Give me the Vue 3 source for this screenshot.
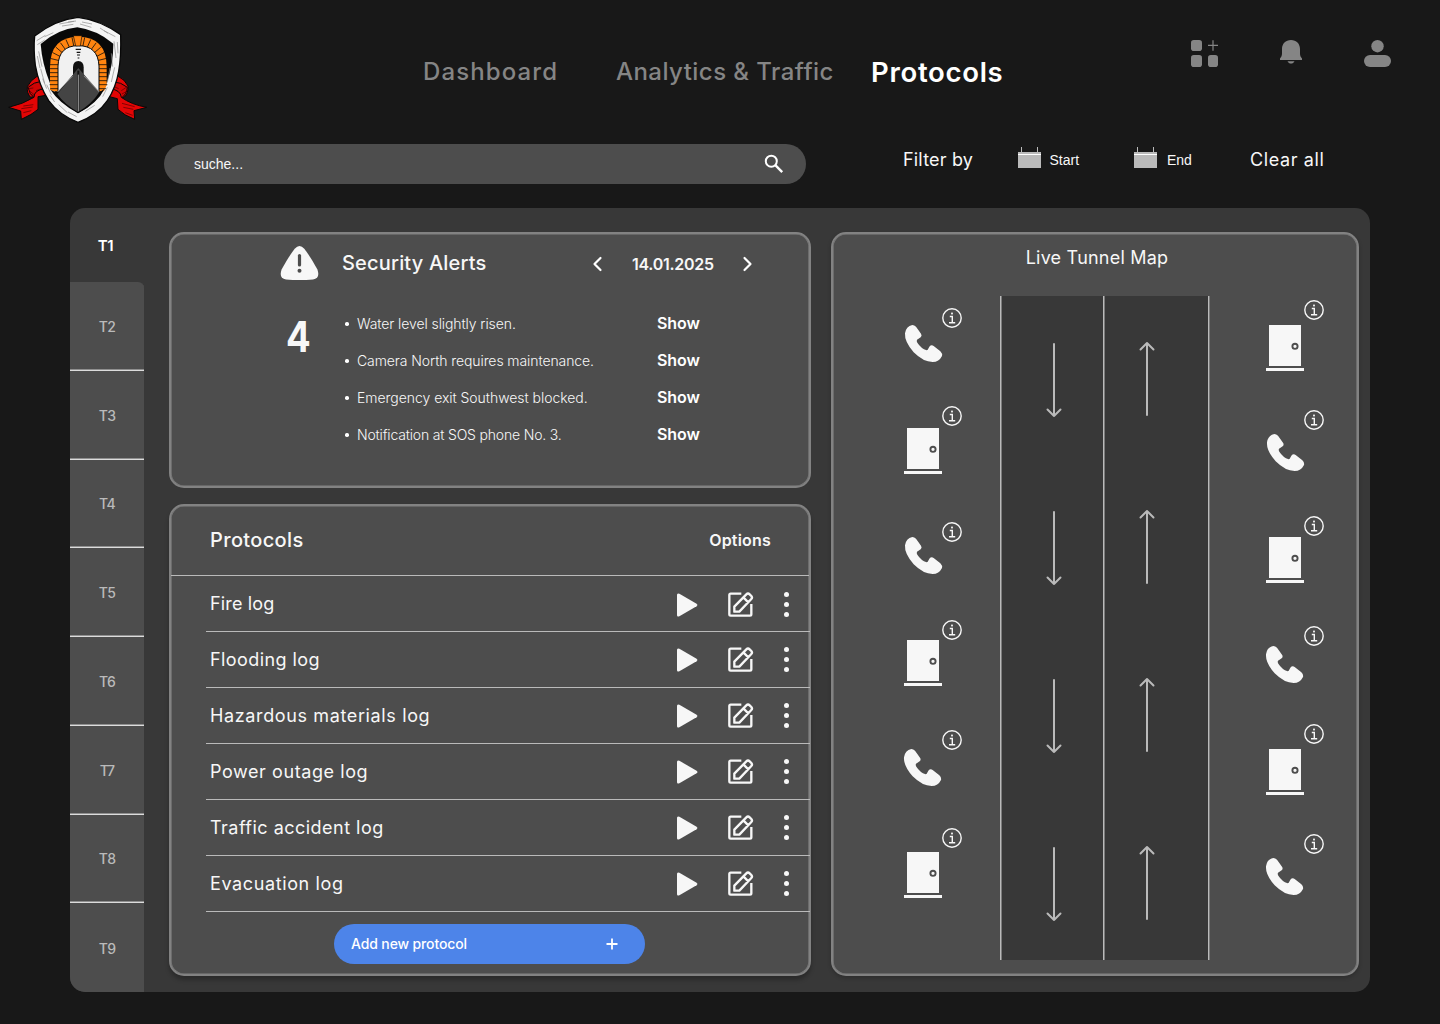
<script setup>
import { ref } from 'vue'

const nav = [
  { label: 'Dashboard', cls: 'nav-dashboard' },
  { label: 'Analytics & Traffic', cls: 'nav-analytics' },
  { label: 'Protocols', cls: 'nav-protocols' },
]
const tunnels = ['T1', 'T2', 'T3', 'T4', 'T5', 'T6', 'T7', 'T8', 'T9']
const activeTunnel = ref('T1')
const alerts = [
  { text: 'Water level slightly risen.', spacing: -0.09 },
  { text: 'Camera North requires maintenance.', spacing: -0.09 },
  { text: 'Emergency exit Southwest blocked.', spacing: -0.04 },
  { text: 'Notification at SOS phone No. 3.', spacing: -0.18 },
]
const protocols = [
  { name: 'Fire log', spacing: 0.16 },
  { name: 'Flooding log', spacing: 0.42 },
  { name: 'Hazardous materials log', spacing: 0.63 },
  { name: 'Power outage log', spacing: 0.58 },
  { name: 'Traffic accident log', spacing: 0.48 },
  { name: 'Evacuation log', spacing: 0.62 },
]

// Device coordinates are relative to the map canvas.
const devices = [
  { type: 'phone', x: 72, y: 91 },
  { type: 'door', x: 71, y: 194 },
  { type: 'phone', x: 72, y: 303 },
  { type: 'door', x: 71, y: 406 },
  { type: 'phone', x: 71, y: 515 },
  { type: 'door', x: 71, y: 618 },
  { type: 'door', x: 433, y: 91 },
  { type: 'phone', x: 434, y: 200 },
  { type: 'door', x: 433, y: 303 },
  { type: 'phone', x: 433, y: 412 },
  { type: 'door', x: 433, y: 515 },
  { type: 'phone', x: 433, y: 624 },
]
const infos = [
  ...[74, 172, 288, 386, 496, 594].map((y) => ({ x: 109, y })),
  ...[66, 176, 282, 392, 490, 600].map((y) => ({ x: 471, y })),
]
const arrows = [0, 168, 336, 504]

// Bricks of the tunnel arch on the crest.
const bricks = []
for (let i = 0; i < 15; i++) {
  const a = Math.PI - (Math.PI * i) / 14
  const [c, s] = [Math.cos(a), Math.sin(a)]
  bricks.push([235 + 60 * c, 194 - 56 * s, 235 + 86 * c, 194 - 84 * s])
}
</script>

<template>
  <div class="page">
    <header class="top">
      <svg class="logo" viewBox="0 0 480 420">
        <g stroke="#080808" stroke-width="3" stroke-linejoin="round">
          <path fill="#e30505" d="M110 230 Q92 240 82 260 Q80 280 92 292 L136 280 L118 228Z" />
          <path fill="#d00404" d="M84 262 Q102 246 124 244 L136 278 L104 294 Q88 284 84 262Z" />
          <path fill="#e30505" d="M134 266 Q102 270 102 292 Q70 312 26 322 L62 333 L64 358 Q96 344 114 328 L114 290 L138 286Z" />
          <path fill="#e30505" d="M356 230 Q374 238 384 258 Q386 280 372 292 L332 280 L348 228Z" />
          <path fill="#d00404" d="M382 262 Q362 246 342 246 L332 274 L364 294 Q380 284 382 262Z" />
          <path fill="#e30505" d="M330 266 Q362 270 364 292 Q394 314 440 322 L402 332 L404 358 Q372 346 354 328 L352 296 L328 290Z" />
        </g>
        <path d="M70 318l30-4M64 326l34-5M70 338l24-6M92 282l12 8M88 272l14 12M366 310l38 10M370 322l30 6M376 338l22 8M366 282l14-8M364 272l18-12M86 266l14-2M108 272l16-6M356 266l-14-6" stroke="#520000" stroke-width="2" fill="none" />
        <path fill="#f4f4f4" stroke="#080808" stroke-width="4" d="M234 52 Q300 60 362 104 Q364 168 356 214 Q348 262 322 302 Q292 346 234 367 Q178 346 146 302 Q116 254 106 196 Q100 148 104 108 Q164 60 234 52Z" />
        <path fill="#080808" d="M232 82 Q290 90 340 131 Q340 190 322 244 Q300 304 234 340 Q174 302 150 250 Q126 190 122 132 Q172 88 232 82Z" />
        <path fill="#ff8410" d="M150 270 V202 Q150 110 235 110 Q320 110 320 202 V256 L312 274 H160Z" />
        <g stroke="#16100a" stroke-width="2.5">
          <line v-for="(b, i) in bricks" :key="i" :x1="b[0]" :y1="b[1]" :x2="b[2]" :y2="b[3]" />
          <path d="M149 206h26M149 218h26M149 230h26M149 242h26M149 254h26M151 266h24M296 206h26M296 218h26M296 230h26M296 242h26M296 254h26M296 266h22" />
        </g>
        <path fill="#f1f1f1" stroke="#080808" stroke-width="3" d="M174 278 V198 Q176 137 235 137 Q294 137 297 198 V278Z" />
        <path fill="#ff8410" stroke="#080808" stroke-width="2" d="M220 107 H246 L241 138 H227Z" />
        <path fill="#111" d="M219 226 V202 Q219 184 235 183 Q251 184 251 202 V226Z" />
        <path fill="#080808" d="M152 270 L172 278 L218 226 L235 204 L252 226 L296 278 L314 266 Q292 310 234 340 Q178 310 152 270Z" />
        <path fill="#444" d="M235 204 L298 276 Q276 312 234 336 Q192 312 172 282Z" />
        <path d="M235 212 V334" stroke="#111" stroke-width="6" />
        <path d="M235 224 V334" stroke="#bbb" stroke-width="2.500" />
        <path d="M172 276 L218 228M298 276 L252 228" stroke="#aaa" stroke-width="2" />
        <path d="M227 148h16M230 157h11M231 165h9M233 174h5" stroke="#111" stroke-width="3.5" />
        <path d="M178 72l44-8M186 78l34-5M204 66l24-3M240 72l34 10M246 66l30 6M110 122l26-16M112 134l22-14M134 110l26-12M116 154l10 46M112 168l8 36M122 206l12 44M128 236l12 30M140 254l14 30M150 286l14 20M342 124l6 50M352 126l2 34M334 160l4 40M330 204l-8 44M344 202l-10 44M322 262l-14 28M284 316l-28 18M176 314l26 24M204 336l26 14M300 84l24 16M312 92l34 18" stroke="#8b8b8b" stroke-width="2" fill="none" />
      </svg>
      <nav class="nav">
        <a v-for="n in nav" :key="n.label" :class="n.cls">{{ n.label }}</a>
      </nav>
      <div class="actions">
        <svg width="27" height="27" viewBox="0 0 27 27" fill="#858585">
          <rect width="11" height="11" rx="2.8" /><rect y="15" width="11" height="12" rx="2.8" /><rect x="17" y="15" width="10" height="12" rx="2.8" />
          <path d="M22 .2v10.6M17 5.4h10" stroke="#858585" stroke-width="1.2" />
        </svg>
        <svg class="bell" width="22" height="24" viewBox="0 0 22 24" fill="#858585">
          <path d="M11 0C5.6 0 2 3.8 2 9v4.2c0 2.3-.6 3.6-2 5.4V20h22v-1.4c-1.400-1.800-2-3.100-2-5.400V9c0-5.200-3.600-9-9-9Z" /><path d="M7.500 21.200h7c-.8 1.600-2 2.400-3.500 2.400s-2.700-.8-3.500-2.400Z" />
        </svg>
        <svg width="27" height="27" viewBox="0 0 27 27" fill="#858585"><circle cx="13.500" cy="6.200" r="6.200" /><rect y="15" width="27" height="12" rx="6" /></svg>
      </div>
    </header>

    <section class="filters">
      <div class="search">
        <span>suche...</span>
        <svg width="20" height="20" viewBox="0 0 20 20" fill="none" stroke="#fff" stroke-width="2"><circle cx="7.300" cy="7.200" r="5.500" /><path d="M11.300 11.200 18.200 18.100" stroke-width="2.400" /></svg>
      </div>
      <span class="filter-by">Filter by</span>
      <div v-for="d in ['Start', 'End']" :key="d" class="date-field" :class="d.toLowerCase()">
        <svg width="23" height="21" viewBox="0 0 23 21"><path d="M0 5h23v16H0z" fill="#bababa" /><path d="M0 7.500h23" stroke="#fff" /><path d="M3.500 0v5M19.500 0v5" stroke="#bababa" /></svg>
        <span>{{ d }}</span>
      </div>
      <span class="clear">Clear all</span>
    </section>

    <main class="panel">
      <aside class="tabs">
        <div v-for="t in tunnels" :key="t" class="tab" :class="{ active: t === activeTunnel }" @click="activeTunnel = t">{{ t }}</div>
      </aside>

      <div class="left">
        <section class="card alerts">
          <div class="alerts-head">
            <svg width="39" height="34" viewBox="0 0 39 34"><path d="M14.700 2.700Q19.500-2.600 24.300 2.700Q31 11.500 37.400 23.500Q40.500 32.500 33 33.500Q19.500 34.600 6 33.500Q-1.500 32.500 1.600 23.500Q8 11.500 14.700 2.700Z" fill="#f7f7f7" /><path d="M19.500 9.500v9.500" stroke="#4d4d4d" stroke-width="3.200" stroke-linecap="round" /><circle cx="19.500" cy="24.800" r="2" fill="#4d4d4d" /></svg>
            <h2>Security Alerts</h2>
            <svg class="prev" width="10" height="16" viewBox="0 0 10 16"><path d="M8.500 2 2.500 8l6 6" /></svg>
            <time>14.01.2025</time>
            <svg class="next" width="10" height="16" viewBox="0 0 10 16"><path d="M1.500 2 7.500 8l-6 6" /></svg>
          </div>
          <div class="alerts-body">
            <strong class="count">4</strong>
            <ul>
              <li v-for="a in alerts" :key="a.text">
                <i></i><span :style="{ letterSpacing: a.spacing + 'px' }">{{ a.text }}</span><b>Show</b>
              </li>
            </ul>
          </div>
        </section>

        <section class="card logs">
          <div class="logs-head"><h2>Protocols</h2><span>Options</span></div>
          <div v-for="p in protocols" :key="p.name" class="log">
            <span class="log-name" :style="{ letterSpacing: p.spacing + 'px' }">{{ p.name }}</span>
            <div class="log-actions">
              <svg width="21" height="24" viewBox="0 0 21 24"><path d="M0 2Q0-.4 2.400.8L19.600 10.700Q21.400 12 19.600 13.300L2.400 23.200Q0 24.400 0 22Z" fill="#f7f7f7" /></svg>
              <svg class="edit" width="26" height="25" viewBox="0 0 78 75" fill="none" stroke="#f7f7f7" stroke-width="7">
                <path d="M40 5H8Q4 5 4 9V67Q4 71 8 71H66Q70 71 70 67V36" /><path d="M19 59V44L55 7Q60 2 65 7L70 12Q74 17 70 21L34 59ZM46 16 61 31" stroke-linejoin="round" />
              </svg>
              <svg width="5" height="25" viewBox="0 0 5 25" fill="#f7f7f7"><circle cx="2.500" cy="2.500" r="2.500" /><circle cx="2.500" cy="12.500" r="2.500" /><circle cx="2.500" cy="22.500" r="2.500" /></svg>
            </div>
          </div>
          <button class="add"><span>Add new protocol</span><svg width="12" height="12" viewBox="0 0 12 12"><path d="M6 .5v11M.5 6h11" stroke="#fff" stroke-width="1.800" /></svg></button>
        </section>
      </div>

      <section class="card map">
        <h3>Live Tunnel Map</h3>
        <div class="road">
          <div class="lane down">
            <svg v-for="a in arrows" :key="a" width="18" height="76" viewBox="0 0 18 76"><path d="M9 1V73M2.500 66.500 9 73l6.500-6.500" /></svg>
          </div>
          <div class="lane up">
            <svg v-for="a in arrows" :key="a" width="18" height="76" viewBox="0 0 18 76"><path d="M9 74V2M2.500 8.500 9 2l6.500 6.500" /></svg>
          </div>
        </div>
        <template v-for="(d, i) in devices" :key="i">
          <svg v-if="d.type === 'phone'" class="pin" :style="{ left: d.x + 'px', top: d.y + 'px' }" width="37" height="37" viewBox="0 0 111 111"><path fill="#f7f7f7" d="M22 0Q28 0 33 5L48 26Q52 32 47 37L36 44Q34 48 37 53Q48 70 65 76Q68 76 69 73L73 65Q79 58 86 63L106 79Q113 86 111 93Q102 111 83 111Q55 111 26 82Q-2 50 0 25Q3 4 22 0Z" /></svg>
          <svg v-else class="pin" :style="{ left: d.x + 'px', top: d.y + 'px' }" width="38" height="46" viewBox="0 0 38 46"><path fill="#f7f7f7" d="M3 0h32v41H3zM0 43h38v3H0z" /><circle cx="29" cy="21.300" r="2.600" fill="none" stroke="#4d4d4d" stroke-width="1.900" /></svg>
        </template>
        <svg v-for="(p, i) in infos" :key="'i' + i" class="pin" :style="{ left: p.x + 'px', top: p.y + 'px' }" width="20" height="20" viewBox="0 0 20 20" fill="none" stroke="#f7f7f7" stroke-width="1.400"><circle cx="10" cy="10" r="9.200" /><path d="M7.800 8.500h2.500v6.300M7 14.800h6.200" /><rect x="9.100" y="4.600" width="1.800" height="1.800" fill="#f7f7f7" stroke="none" /></svg>
      </section>
    </main>
  </div>
</template>

<style>
body { margin: 0; background: #181818; }
</style>
<style scoped>
* { box-sizing: border-box; }
.page { width: 1440px; height: 1024px; overflow: hidden; background: #181818; color: #f7f7f7; font-family: Inter, sans-serif; }
svg { display: block; flex: none; overflow: visible; }
h2, h3, ul { margin: 0; padding: 0; }
h2 { font-size: 20px; font-weight: 500; line-height: 24px; white-space: nowrap; }

.top { display: flex; height: 144px; }
.logo { width: 160px; height: 140px; }
.nav { display: grid; grid-template-columns: 193px 255px 140px; margin-left: 263px; width: 768px; line-height: 143px; font-size: 24px; font-weight: 500; color: #858585; white-space: nowrap; }
.nav-dashboard { letter-spacing: 1.1px; }
.nav-analytics { letter-spacing: .45px; }
.nav-protocols { font-size: 27.5px; font-weight: 600; letter-spacing: .7px; color: #fff; line-height: 145px; }
.actions { display: flex; align-items: flex-start; justify-content: space-between; width: 200px; padding-top: 40px; }

.filters { display: flex; height: 64px; font-size: 18px; line-height: 22px; white-space: nowrap; }
.search { display: flex; align-items: center; justify-content: space-between; width: 642px; height: 40px; margin-left: 164px; padding: 0 22px 0 30px; border-radius: 20px; background: #4d4d4d; font: 14px "Liberation Sans", Arial, sans-serif; }
.filter-by { width: 115px; margin: 5px 0 0 97px; letter-spacing: .18px; }
.date-field { display: flex; width: 116px; padding-top: 3px; font: 14px/26px "Liberation Sans", Arial, sans-serif; }
.date-field span { margin-left: 8.500px; }
.date-field.end span { margin-left: 10px; }
.clear { margin-top: 5px; letter-spacing: .62px; }

.panel { display: flex; width: 1300px; height: 784px; margin-left: 70px; border-radius: 15px; background: #383838; overflow: hidden; }
.tabs { width: 74px; display: flex; flex-direction: column; }
.tab { flex: none; height: 88.780px; padding-top: 1px; display: flex; align-items: center; justify-content: center; background: #4d4d4d; border-bottom: 1px solid #dcdcdc; box-shadow: inset 0 -1px #8f8f8f; font-size: 14px; font-weight: 500; letter-spacing: -.7px; color: #bababa; }
.tab.active { height: 74px; padding: 0 3px 0 0; background: none; border: 0; box-shadow: none; color: #fff; font-size: 15px; font-weight: 600; letter-spacing: -.4px; }
.tab:nth-child(2) { border-top-right-radius: 6px; }
.tab:last-child { flex: 1; border-bottom: 0; box-shadow: none; }

.card { border: 2px solid #828282; border-radius: 15px; background: #4d4d4d; box-shadow: inset 0 0 0 .6px #828282; }
.left { display: flex; flex-direction: column; gap: 16px; width: 642px; margin: 24px 0 0 25px; }
.alerts { height: 256px; }
.alerts-head { display: flex; align-items: center; height: 58px; padding-left: 109px; }
.alerts-head h2 { width: 250px; margin-left: 23px; letter-spacing: .18px; }
.prev, .next { margin-top: 2px; fill: none; stroke: #fff; stroke-width: 2.200; stroke-linecap: round; stroke-linejoin: round; }
.alerts-head time { width: 84px; margin: 2px 27px 0 30px; font-size: 16px; font-weight: 600; letter-spacing: -.27px; }
.alerts-body { display: flex; padding: 2px 0 0 115px; }
.count { width: 59px; height: 40px; margin-top: 22px; font-size: 42px; line-height: 41px; font-weight: 700; transform: scaleX(.87); transform-origin: left; }
ul { padding-top: 11px; list-style: none; }
li { display: grid; grid-template-columns: 12px 300px 50px; align-items: center; height: 37px; font-size: 14px; font-weight: 300; white-space: nowrap; }
li i { width: 3.500px; height: 3.500px; border-radius: 50%; background: #fff; margin-top: 1px; }
li b { font-size: 16px; font-weight: 600; letter-spacing: -.1px; margin-top: -1px; color: #fff; }
li span { margin-top: -1px; }

.logs { height: 472px; box-shadow: inset 0 0 0 .6px #828282, 0 4px 4px rgba(0, 0, 0, .25); }
.logs-head { display: flex; align-items: center; justify-content: space-between; height: 70px; padding: 0 38px 2px 39px; border-bottom: 1px solid #bababa; }
.logs-head h2 { letter-spacing: .35px; }
.logs-head span { font-size: 16px; font-weight: 600; letter-spacing: .2px; }
.log { display: flex; align-items: center; height: 56px; margin: 0 -1px 0 35px; padding-left: 4px; border-bottom: 1px solid #bababa; font-size: 18px; }
.log-name { width: 467px; white-space: nowrap; }
.log-actions { display: flex; align-items: center; }
.log:nth-child(2) .log-actions { margin-top: 2px; }
.edit { margin: 0 30px; }
.add { display: flex; align-items: center; justify-content: space-between; width: 311px; height: 40px; margin: 12px 0 0 163px; padding: 0 27px 0 17px; border: 0; border-radius: 20px; background: #4d84e9; color: #fff; font: 500 14px Inter, sans-serif; letter-spacing: -.13px; }
.add span { margin-top: -1px; }

.map { position: relative; width: 528px; height: 744px; margin: 24px 0 0 20px; box-shadow: inset 0 0 0 .6px #828282, 0 2px 4px rgba(0, 0, 0, .2); }
.map h3 { padding: 12px 0 0 4px; font-size: 18px; line-height: 24px; font-weight: 400; letter-spacing: .22px; text-align: center; }
.road { display: flex; width: 210px; height: 664px; margin: 26px 0 0 167px; background: #383838; border-left: 1px solid #bababa; border-right: 1px solid #7c7c7c; box-shadow: inset 1px 0 #7c7c7c, inset -1px 0 #bababa; }
.lane { display: flex; flex-direction: column; align-items: center; gap: 92px; padding-top: 47px; fill: none; stroke: #bababa; stroke-width: 2; stroke-linecap: round; stroke-linejoin: round; }
.down { width: 104px; padding-left: 2px; border-right: 1px solid #7c7c7c; box-shadow: inset -1px 0 #bababa; }
.up { width: 83px; padding-top: 45px; }
.pin { position: absolute; }
</style>
